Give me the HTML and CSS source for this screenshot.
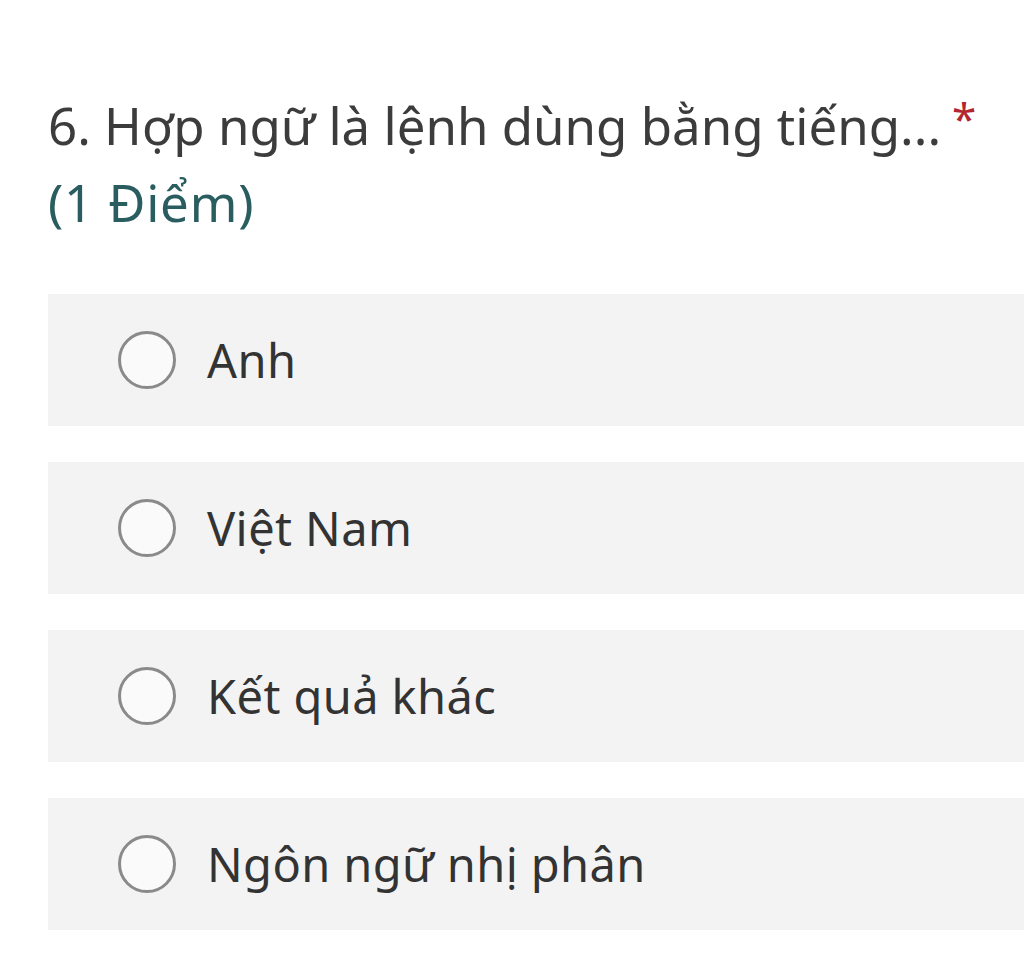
FILE: index.html
```html
<!DOCTYPE html>
<html lang="vi">
<head>
<meta charset="utf-8">
<link rel="stylesheet" href="styles.css">
</head>
<body>
<div class="question">
  <div class="title">
    <span class="q-text">6. Hợp ngữ là lệnh dùng bằng tiếng...</span><span class="req">*</span>
    <div class="points">(1 Điểm)</div>
  </div>
  <div class="options">
    <div class="option"><span class="radio"></span><span class="label">Anh</span></div>
    <div class="option"><span class="radio"></span><span class="label">Việt Nam</span></div>
    <div class="option"><span class="radio"></span><span class="label">Kết quả khác</span></div>
    <div class="option"><span class="radio"></span><span class="label">Ngôn ngữ nhị phân</span></div>
  </div>
</div>
</body>
</html>
```
FILE: styles.css
```css
html, body {
  margin: 0;
  padding: 0;
  background: #ffffff;
}
body {
  font-family: "Noto Sans", Roboto, sans-serif;
  width: 1024px;
  height: 972px;
  overflow: hidden;
}
.question {
  padding: 86px 0 0 48px;
}
.title {
  font-size: 51px;
  line-height: 78px;
  color: #3c3c3c;
  padding-right: 20px;
  white-space: nowrap;
}
.req {
  color: #b3262f;
  margin-left: 11px;
  font-size: 44px;
  position: relative;
  top: -10px;
}
.points {
  color: #2a5d5f;
  letter-spacing: 0.8px;
  margin-top: -4px;
}
.options {
  margin-top: 53px;
  display: flex;
  flex-direction: column;
  gap: 36px;
}
.option {
  background: #f3f3f3;
  height: 132px;
  margin-right: -20px;
  display: flex;
  align-items: center;
  padding-left: 70px;
}
.radio {
  width: 52px;
  height: 52px;
  border: 3px solid #8a8a8a;
  border-radius: 50%;
  background: #fafafa;
  flex: none;
}
.label {
  margin-left: 31px;
  font-size: 47px;
  letter-spacing: 0.4px;
  color: #333333;
}
```
